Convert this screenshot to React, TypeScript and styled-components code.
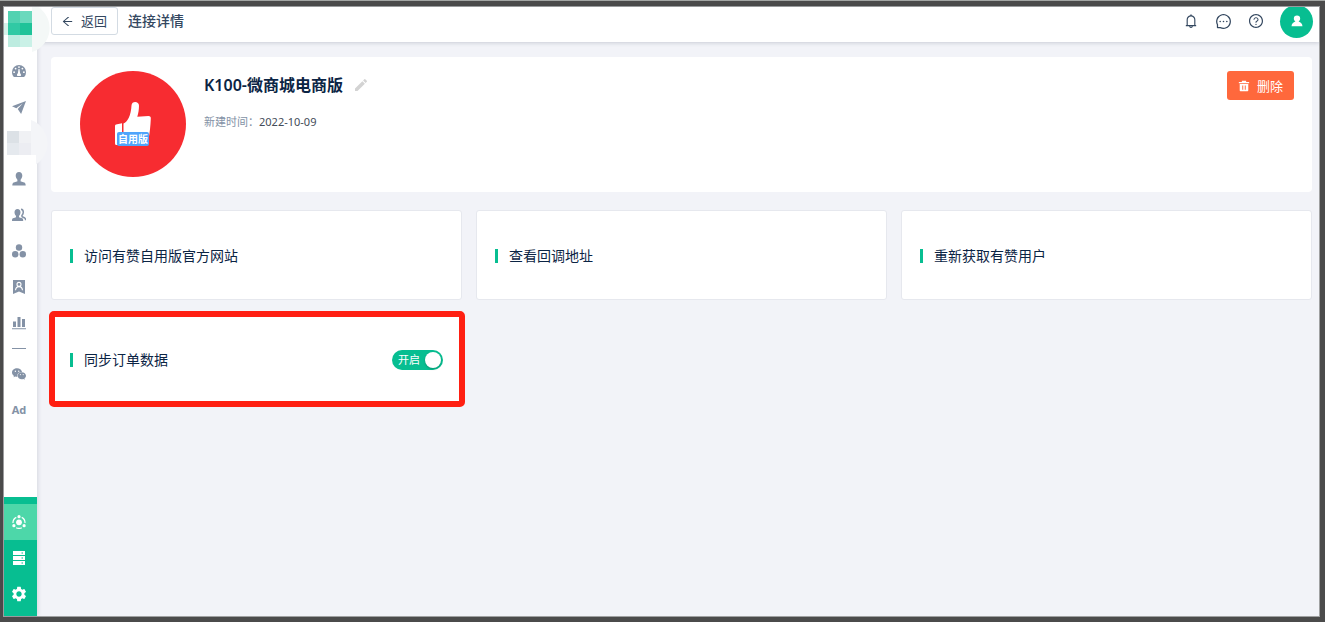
import React, { useState } from "react";
import styled, { createGlobalStyle } from "styled-components";
import {
  AiFillWechat,
  AiOutlineArrowLeft,
  AiOutlineBell,
  AiOutlineMessage,
  AiOutlineQuestionCircle,
} from "react-icons/ai";
import { MdModeEdit, MdSettings } from "react-icons/md";

const color = {
  green: "#07be91",
  greenSoft: "#4dd7a9",
  red: "#ff1f12",
  orange: "#ff683c",
  ink: "#0b2444",
  slate: "#33475f",
  muted: "#8492a6",
  page: "#f2f3f8",
  line: "#e6e8ee",
};

const GlobalStyle = createGlobalStyle`
  *, *::before, *::after { box-sizing: border-box; }
  body {
    margin: 0;
    font-family: "Noto Sans", "Noto Sans CJK SC", sans-serif;
    font-size: 14px;
    color: ${color.ink};
  }
  h1, h2, p { margin: 0; }
  button { font-family: inherit; cursor: pointer; }
  a { color: inherit; text-decoration: none; }
  svg { display: block; flex: none; }
`;

const Frame = styled.div`
  min-height: 100vh;
  display: flex;
  padding: 5px 5px 5px 3px;
  border-top: 1px solid #a3a6a4;
  background: #4b4b4b;
`;

const Window = styled.div`
  flex: 1;
  min-width: 0;
  display: flex;
  border: 1px solid #a0a1a2;
  background: ${color.page};
`;

const Sidebar = styled.nav`
  position: relative;
  z-index: 1;
  flex: none;
  width: 33px;
  display: flex;
  flex-direction: column;
  background: #fff;
  box-shadow: 1px 0 4px rgba(40, 50, 80, 0.14);
  color: ${color.muted};
`;

const LogoLink = styled.a`
  height: 46px;
  padding: 4px 0 0 4px;
`;

const NavLink = styled.a<{ $active?: boolean }>`
  height: 36px;
  display: flex;
  align-items: center;
  justify-content: center;
  padding-right: 3px;
  font-size: 11px;
  line-height: 14px;
  font-weight: 700;
  background: ${(p) => (p.$active ? color.greenSoft : "transparent")};
`;

const NavDivider = styled.hr`
  width: 14px;
  margin: 7px 8px;
  border: 0;
  border-top: 1px solid ${color.muted};
`;

const NavFooter = styled.div`
  margin-top: auto;
  padding: 7px 0 4px;
  background: ${color.green};
  color: #fff;
`;

const Mosaic = styled.svg`
  overflow: visible;
`;

const Body = styled.div`
  flex: 1;
  min-width: 0;
  display: flex;
  flex-direction: column;
`;

const Header = styled.header`
  display: flex;
  align-items: flex-start;
  justify-content: space-between;
  height: 35px;
  padding: 0 6px 0 14px;
  overflow: hidden;
  background: #fff;
  box-shadow: 0 1px 4px rgba(40, 50, 80, 0.2);
`;

const HeaderGroup = styled.div<{ $gap: number }>`
  height: 28px;
  display: flex;
  align-items: center;
  gap: ${(p) => p.$gap}px;
`;

const BackButton = styled.button`
  height: 28px;
  display: flex;
  align-items: center;
  gap: 7px;
  padding: 0 10px 0 9px;
  border: 1px solid #d3dbe3;
  border-radius: 3px;
  background: #fff;
  color: ${color.slate};
  font-size: 13px;
  line-height: 20px;
`;

const PageTitle = styled.h1`
  font-size: 14px;
  line-height: 20px;
  font-weight: 500;
  color: ${color.slate};
`;

const IconButton = styled.button`
  display: flex;
  padding: 0;
  border: 0;
  background: none;
  color: ${color.slate};
`;

const Account = styled(IconButton)`
  flex: none;
  width: 33px;
  height: 33px;
  align-items: center;
  justify-content: center;
  border-radius: 50%;
  background: ${color.green};
  color: #fff;
`;

const Content = styled.main`
  display: flex;
  flex-direction: column;
  gap: 18px;
  padding: 15px 7px 14px 14px;
`;

const Summary = styled.section`
  display: flex;
  align-items: flex-start;
  gap: 18px;
  padding: 14px 18px 15px 29px;
  border-radius: 4px;
  background: #fff;
`;

const SummaryText = styled.div`
  flex: 1;
  display: flex;
  flex-direction: column;
  gap: 13px;
`;

const NameRow = styled.div`
  display: flex;
  align-items: center;
  gap: 10px;
`;

const Name = styled.h2`
  font-size: 16px;
  line-height: 28px;
  font-weight: 600;
`;

const EditButton = styled(IconButton)`
  color: #d3d3d3;
`;

const Created = styled.p`
  font-size: 11px;
  line-height: 20px;
  color: #444c58;
`;

const CreatedLabel = styled.span`
  color: ${color.muted};
`;

const DeleteButton = styled.button`
  height: 29px;
  display: flex;
  align-items: center;
  gap: 7px;
  padding: 0 11px;
  border: 0;
  border-radius: 3px;
  background: ${color.orange};
  color: #fff;
  font-size: 13px;
  line-height: 20px;
`;

const TileGrid = styled.div`
  display: grid;
  grid-template-columns: repeat(3, 1fr);
  gap: 14px;
`;

const Tile = styled.div<{ $marked?: boolean }>`
  position: relative;
  height: 90px;
  display: flex;
  align-items: center;
  justify-content: space-between;
  padding: 2px 18px 0;
  border: 1px solid ${color.line};
  border-radius: 3px;
  background: #fff;

  &::after {
    content: "";
    display: ${(p) => (p.$marked ? "block" : "none")};
    position: absolute;
    inset: -4px -4px -4px -3px;
    border: 6px solid ${color.red};
    border-radius: 5px;
    pointer-events: none;
  }
`;

const TileLabel = styled.span`
  display: flex;
  align-items: center;
  gap: 11px;
  line-height: 20px;

  &::before {
    content: "";
    width: 3px;
    height: 14px;
    background: ${color.green};
  }
`;

const Switch = styled.label`
  position: relative;
  width: 51px;
  height: 20px;
  display: flex;
  align-items: center;
  justify-content: space-between;
  padding: 0 2px 0 6px;
  border-radius: 10px;
  background: #b8c0cb;
  color: #fff;
  font-size: 11px;
  line-height: 20px;
  cursor: pointer;

  &::after {
    content: "";
    width: 16px;
    height: 16px;
    border-radius: 50%;
    background: #fff;
    box-shadow: 0 1px 2px rgba(0, 60, 40, 0.3);
  }

  &:has(input:checked) {
    background: ${color.green};
  }
`;

const SwitchInput = styled.input`
  position: absolute;
  inset: 0;
  width: 100%;
  height: 100%;
  margin: 0;
  opacity: 0;
  cursor: pointer;
`;

const Logo = () => (
  <Mosaic width="24" height="36">
    <path d="M24 -4H30A25 25 0 0 1 24 41Z" fill="#f4f8f7" />
    <g shapeRendering="crispEdges">
      <path d="M-4 12H0V24H-4Z" fill="#d5f3ea" />
      <path d="M0 0H12V12H0Z" fill="#52d2b1" />
      <path d="M12 0H24V12H12Z" fill="#6bd9bd" />
      <path d="M0 12H12V24H0Z" fill="#31c9a4" />
      <path d="M12 12H24V24H12Z" fill="#1fc399" />
      <path d="M0 24H12V36H0Z" fill="#bdece0" />
      <path d="M12 24H24V36H12Z" fill="#caf1e7" />
    </g>
  </Mosaic>
);

const MaskedIcon = () => (
  <Mosaic width="24" height="24">
    <path d="M24 -11A25 25 0 0 1 24 36Z" fill="#f4f5f8" />
    <g shapeRendering="crispEdges">
      <path d="M24 24H29V36H24Z" fill="#fff" />
      <path d="M0 0H12V12H0Z" fill="#dce1e6" />
      <path d="M12 0H24V12H12Z" fill="#f0f1f4" />
      <path d="M0 12H12V24H0Z" fill="#e5e9ee" />
      <path d="M12 12H24V24H12Z" fill="#ecedf2" />
    </g>
  </Mosaic>
);

const Glyph = ({ size = 14, children }: { size?: number; children: React.ReactNode }) => (
  <svg width={size} height={size} viewBox="0 0 14 14" fill="currentColor" aria-hidden="true">
    {children}
  </svg>
);

const DashboardIcon = () => (
  <Glyph>
    <path
      fillRule="evenodd"
      d="M7 1a7 7 0 0 0-7 7c0 1.7.5 3.3 1.4 4.6.2.3.4.4.8.4h9.600c.4 0 .6-.1.8-.4A8 8 0 0 0 14 8a7 7 0 0 0-7-7ZM7 2.200a.9.9 0 1 1 0 1.800.9.9 0 0 1 0-1.800ZM3.600 3.700a.9.9 0 1 1 0 1.800.9.9 0 0 1 0-1.800ZM10.400 3.700a.9.9 0 1 1 0 1.800.9.9 0 0 1 0-1.800ZM2.100 7.300a.9.9 0 1 1 0 1.800.9.9 0 0 1 0-1.800ZM11.900 7.300a.9.9 0 1 1 0 1.800.9.9 0 0 1 0-1.800ZM6.500 5h1l.6 4.200c.6.4.9 1 .9 1.700 0 .4-.1.800-.3 1.100H5.300a2.200 2.200 0 0 1 .6-2.800Z"
    />
  </Glyph>
);

const SendIcon = () => (
  <Glyph>
    <path d="M14 1 0 6.200l4.300 2.100 6.400-4.700-5 5.400 3.400 5Z" />
  </Glyph>
);

const PersonIcon = () => (
  <Glyph>
    <path d="M7 0C4.900 0 3.700 1.500 3.700 3.600c0 1.700.7 3.200 1.700 4.100v1.200c0 .3-.2.500-.5.600L1.800 10.600C.8 11 .4 11.700.3 13.500h13.400c-.1-1.800-.5-2.500-1.500-2.900L9.100 9.500c-.3-.1-.5-.3-.5-.6V7.700c1-.9 1.700-2.400 1.700-4.100C10.300 1.500 9.100 0 7 0Z" />
  </Glyph>
);

const AccountIcon = () => (
  <Glyph size={12}>
    <path d="M7 .5a3.700 3.700 0 0 0-3.700 3.700c0 1.500.8 2.700 1.900 3.500C2.500 8.600.8 10.300.6 13h12.800c-.2-2.700-1.900-4.400-4.600-5.300 1.100-.8 1.900-2 1.900-3.500A3.700 3.700 0 0 0 7 .5Z" />
  </Glyph>
);

const PeopleIcon = () => (
  <Glyph>
    <path d="M5.500 1C3.600 1 2.500 2.300 2.500 4.200c0 1.500.6 2.800 1.500 3.600v1c0 .3-.2.500-.5.600L1 10.300c-.7.300-1 .900-1 2.700h11.200c0-1.800-.3-2.400-1-2.700L7.500 9.400C7.200 9.300 7 9.100 7 8.800v-1c.9-.8 1.500-2.100 1.500-3.600C8.500 2.300 7.400 1 5.500 1Z" />
    <path
      d="M9 1.200c1.600.200 2.300 1.400 2.300 3 0 1.300-.6 2.300-1.400 3.200l.2 1.300 2.700 1.300c.6.400.8 1 .8 2.300"
      fill="none"
      stroke="currentColor"
      strokeWidth="1.500"
    />
  </Glyph>
);

const GroupIcon = () => (
  <Glyph>
    <circle cx="7" cy="3.500" r="3.200" />
    <circle cx="3.200" cy="10.200" r="3.200" />
    <circle cx="10.800" cy="10.200" r="3.200" />
  </Glyph>
);

const BadgeIcon = () => (
  <Glyph>
    <path d="M1 0h12v14l-6-2.400L1 14Z" />
    <g fill="none" stroke="#fff" strokeWidth="1.100">
      <circle cx="7" cy="4.400" r="2" />
      <path d="M3.500 10.300c.3-2.500 1.600-3.700 3.500-3.700s3.200 1.200 3.500 3.700" />
    </g>
  </Glyph>
);

const ChartIcon = () => (
  <Glyph>
    <path d="M1 5.500h3V11H1ZM5.500 1h3v10h-3ZM10 3h3v8h-3ZM0 12.200h14v1H0Z" />
  </Glyph>
);

const ConnectIcon = () => (
  <Glyph>
    <circle cx="7" cy="7.300" r="2.900" />
    <circle cx="7" cy="1.700" r="1.600" />
    <circle cx="1.900" cy="10.700" r="1.600" />
    <circle cx="12.100" cy="10.700" r="1.600" />
    <g fill="none" stroke="currentColor" strokeWidth="1.200">
      <path d="M4.300 2.400A5.900 5.900 0 0 0 1 8M9.700 2.400A5.900 5.900 0 0 1 13 8M4.200 12.700a6 6 0 0 0 5.600 0" />
    </g>
  </Glyph>
);

const ServerIcon = () => (
  <Glyph>
    <path
      fillRule="evenodd"
      d="M1 0h12v4H1ZM1 5h12v4H1ZM1 10h12v4H1ZM9.500 1.500v1H11v-1ZM9.500 6.500v1H11v-1ZM9.500 11.500v1H11v-1Z"
    />
  </Glyph>
);

const TrashIcon = () => (
  <Glyph size={12}>
    <path
      fillRule="evenodd"
      d="M4.500 1h5v1.300H13v1.500H1V2.300h3.500ZM2 4.700h10V12c0 .7-.5 1.200-1.200 1.200H3.200C2.500 13.200 2 12.700 2 12ZM5 6.300v5.200h1.100V6.300ZM7.900 6.300v5.200H9V6.300Z"
    />
  </Glyph>
);

const BrandLogo = () => (
  <svg width="106" height="106" viewBox="0 0 106 106" role="img" aria-label="自用版">
    <circle cx="53" cy="53" r="53" fill="#f72c31" />
    <path
      d="M36 53.500l6-1.200V74h-5.500q-1.500 0-1.500-1.500V55q0-1.400 1-1.500ZM43.500 52.500c4-1.500 7.500-8 8-18 .2-4.800 7.600-4.500 7.500.3-.1 4-.6 7.500-1.700 11l11.200-.8c1.700 0 2.500 1 2.300 2.700-.3 7-1 14-2.300 20.300-.5 3.500-1.500 5-4 5H43.500Z"
      fill="#fff"
    />
    <rect x="37" y="61" width="32" height="14" rx="2" fill="#4fa4fb" />
    <text x="53" y="72" textAnchor="middle" fontSize="10" fontWeight="700" fill="#fff">
      自用版
    </text>
  </svg>
);

const navItems = [
  { label: "仪表盘", icon: <DashboardIcon /> },
  { label: "发送", icon: <SendIcon /> },
  { label: "应用", icon: <MaskedIcon /> },
  { label: "用户", icon: <PersonIcon /> },
  { label: "群组", icon: <PeopleIcon /> },
  { label: "分组", icon: <GroupIcon /> },
  { label: "名片", icon: <BadgeIcon /> },
  { label: "报表", icon: <ChartIcon /> },
];

const links = ["访问有赞自用版官方网站", "查看回调地址", "重新获取有赞用户"];

export default function App() {
  const [sync, setSync] = useState(true);

  return (
    <>
      <GlobalStyle />
      <Frame>
        <Window>
          <Sidebar>
            <LogoLink href="#" aria-label="首页">
              <Logo />
            </LogoLink>
            {navItems.map((item) => (
              <NavLink key={item.label} href="#" aria-label={item.label}>
                {item.icon}
              </NavLink>
            ))}
            <NavDivider />
            <NavLink href="#" aria-label="微信">
              <AiFillWechat size={16} />
            </NavLink>
            <NavLink href="#">Ad</NavLink>
            <NavFooter>
              <NavLink href="#" aria-label="连接" $active>
                <ConnectIcon />
              </NavLink>
              <NavLink href="#" aria-label="数据">
                <ServerIcon />
              </NavLink>
              <NavLink href="#" aria-label="设置">
                <MdSettings size={18} />
              </NavLink>
            </NavFooter>
          </Sidebar>

          <Body>
            <Header>
              <HeaderGroup $gap={10}>
                <BackButton type="button">
                  <AiOutlineArrowLeft size={13} />
                  返回
                </BackButton>
                <PageTitle>连接详情</PageTitle>
              </HeaderGroup>
              <HeaderGroup $gap={16}>
                <IconButton type="button" aria-label="通知">
                  <AiOutlineBell size={16} />
                </IconButton>
                <IconButton type="button" aria-label="消息">
                  <AiOutlineMessage size={17} />
                </IconButton>
                <IconButton type="button" aria-label="帮助">
                  <AiOutlineQuestionCircle size={16} />
                </IconButton>
                <Account type="button" aria-label="账户">
                  <AccountIcon />
                </Account>
              </HeaderGroup>
            </Header>

            <Content>
              <Summary>
                <BrandLogo />
                <SummaryText>
                  <NameRow>
                    <Name>K100-微商城电商版</Name>
                    <EditButton type="button" aria-label="编辑名称">
                      <MdModeEdit size={16} />
                    </EditButton>
                  </NameRow>
                  <Created>
                    <CreatedLabel>新建时间：</CreatedLabel>2022-10-09
                  </Created>
                </SummaryText>
                <DeleteButton type="button">
                  <TrashIcon />
                  删除
                </DeleteButton>
              </Summary>

              <TileGrid>
                {links.map((text) => (
                  <Tile key={text}>
                    <a href="#">
                      <TileLabel>{text}</TileLabel>
                    </a>
                  </Tile>
                ))}
                <Tile $marked>
                  <TileLabel id="sync-label">同步订单数据</TileLabel>
                  <Switch>
                    <SwitchInput
                      type="checkbox"
                      role="switch"
                      aria-labelledby="sync-label"
                      checked={sync}
                      onChange={(e) => setSync(e.target.checked)}
                    />
                    {sync ? "开启" : "关闭"}
                  </Switch>
                </Tile>
              </TileGrid>
            </Content>
          </Body>
        </Window>
      </Frame>
    </>
  );
}
